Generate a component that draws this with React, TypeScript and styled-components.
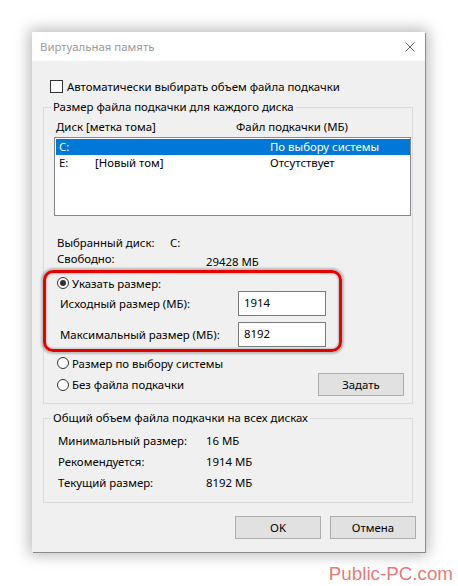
import React from "react";
import styled, { createGlobalStyle } from "styled-components";

const GlobalStyle = createGlobalStyle`
  html, body {
    margin: 0;
    padding: 0;
    background: #fff;
  }
  body {
    font-family: "Noto Sans", "Segoe UI", sans-serif;
    font-size: 11.4px;
    color: #000;
  }
`;

const Page = styled.div`
  width: 458px;
  height: 586px;
  box-sizing: border-box;
  padding: 32px 0 0 32px;
  overflow: hidden;
`;

const Dialog = styled.div`
  width: 393px;
  background: #f0f0f0;
  box-shadow: 1px 1px 0 #8a8a8a, 0 0 14px 3px rgba(0, 0, 0, 0.28);
`;

const TitleBar = styled.div`
  height: 29px;
  background: #fff;
  display: flex;
  align-items: center;
  justify-content: space-between;
  padding: 0 10px 0 8px;
  color: #9a9a9a;
`;

const Body = styled.div`
  padding: 0 9px 13px 11px;
`;

const CheckRow = styled.div`
  display: flex;
  align-items: center;
  gap: 4px;
  height: 16px;
  margin: 17px 0 5px 7px;
`;

const CheckBox = styled.span`
  width: 13px;
  height: 13px;
  box-sizing: border-box;
  border: 1px solid #333;
  background: #fff;
`;

const Group = styled.fieldset<{ $top?: number }>`
  margin: ${(p) => p.$top ?? 0}px 3px 0 0;
  padding: 0;
  min-width: 0;
  border: 1px solid #dcdcdc;
`;

const Legend = styled.legend`
  margin-left: 7px;
  padding: 0 2px;
  line-height: 16px;
`;

const GroupInner = styled.div<{ $pad: string }>`
  padding: ${(p) => p.$pad};
`;

const ListHeader = styled.div`
  display: grid;
  grid-template-columns: 180px 1fr;
  height: 16px;
  line-height: 16px;
  padding-left: 2px;
  margin: 4px 0 2px;
`;

const ListBox = styled.div`
  width: 357px;
  height: 79px;
  box-sizing: border-box;
  border: 1px solid #828790;
  background: #fff;
  padding: 1px 0 0 1px;
`;

const ListRow = styled.div<{ $selected?: boolean }>`
  display: grid;
  grid-template-columns: 36px 175px 1fr;
  height: 16px;
  line-height: 16px;
  padding-left: 3px;
  background: ${(p) => (p.$selected ? "#0078d7" : "transparent")};
  color: ${(p) => (p.$selected ? "#fff" : "#000")};
`;

const InfoRow = styled.div<{ $col: number; $top?: number }>`
  display: grid;
  grid-template-columns: ${(p) => p.$col}px 1fr;
  height: 16px;
  line-height: 16px;
  padding-left: 3px;
  margin-top: ${(p) => p.$top ?? 0}px;
`;

const Value = styled.span<{ $drop?: number }>`
  padding-top: ${(p) => p.$drop ?? 0}px;
`;

const Highlight = styled.div`
  position: relative;
  margin-top: 8px;

  &::after {
    content: "";
    position: absolute;
    top: -5px;
    bottom: -5px;
    left: -11px;
    right: 70px;
    border: 3px solid #e60000;
    border-radius: 10px;
    box-shadow: 0 0 2px 2px rgba(0, 0, 0, 0.22), inset 0 0 2px 1px rgba(0, 0, 0, 0.2);
    pointer-events: none;
  }
`;

const RadioRow = styled.div<{ $top?: number }>`
  display: flex;
  align-items: center;
  gap: 3px;
  height: 16px;
  padding-left: 3px;
  margin-top: ${(p) => p.$top ?? 0}px;
`;

const Radio = styled.span<{ $on?: boolean }>`
  width: 12px;
  height: 12px;
  box-sizing: border-box;
  border: 1px solid #333;
  border-radius: 50%;
  background: #fff;
  display: flex;
  align-items: center;
  justify-content: center;

  &::after {
    content: "";
    width: 6px;
    height: 6px;
    border-radius: 50%;
    background: ${(p) => (p.$on ? "#333" : "transparent")};
  }
`;

const FieldRow = styled.div<{ $top?: number }>`
  display: grid;
  grid-template-columns: 178px 88px;
  align-items: center;
  padding-left: 6px;
  margin-top: ${(p) => p.$top ?? 0}px;
`;

const Field = styled.div`
  height: 25px;
  box-sizing: border-box;
  border: 1px solid #7a7a7a;
  background: #fff;
  padding-left: 5px;
  line-height: 22px;
`;

const LastRow = styled.div`
  display: flex;
  align-items: center;
  justify-content: space-between;
  margin-top: 2px;
  padding-right: 8px;
`;

const Button = styled.div`
  width: 86px;
  height: 23px;
  box-sizing: border-box;
  border: 1px solid #adadad;
  background: #e1e1e1;
  display: flex;
  align-items: center;
  justify-content: center;
`;

const TotalRow = styled.div`
  display: grid;
  grid-template-columns: 148px 1fr;
  height: 21px;
  line-height: 21px;
`;

const Footer = styled.div`
  display: flex;
  justify-content: flex-end;
  gap: 9px;
  margin-top: 13px;
`;

const Watermark = styled.div`
  display: flex;
  justify-content: flex-end;
  padding-right: 5px;
  margin-top: 11px;
  font-family: "Liberation Sans", Arial, sans-serif;
  font-size: 18.8px;
  line-height: 21px;
  color: rgba(225, 40, 40, 0.65);
`;

function CloseIcon() {
  return (
    <svg width="10" height="10" viewBox="0 0 10 10">
      <path d="M0.5 0.5L9.5 9.5M9.5 0.5L0.5 9.5" stroke="#666" strokeWidth="1" fill="none" />
    </svg>
  );
}

export default function App() {
  return (
    <>
      <GlobalStyle />
      <Page>
        <Dialog>
          <TitleBar>
            <span>Виртуальная память</span>
            <CloseIcon />
          </TitleBar>
          <Body>
            <CheckRow>
              <CheckBox />
              <span>Автоматически выбирать объем файла подкачки</span>
            </CheckRow>

            <Group>
              <Legend>Размер файла подкачки для каждого диска</Legend>
              <GroupInner $pad="0 0 7px 10px">
                <ListHeader>
                  <span>Диск [метка тома]</span>
                  <span>Файл подкачки (МБ)</span>
                </ListHeader>
                <ListBox>
                  <ListRow $selected>
                    <span>C:</span>
                    <span></span>
                    <span>По выбору системы</span>
                  </ListRow>
                  <ListRow>
                    <span>E:</span>
                    <span>[Новый том]</span>
                    <span>Отсутствует</span>
                  </ListRow>
                </ListBox>

                <InfoRow $col={113} $top={19}>
                  <span>Выбранный диск:</span>
                  <span>C:</span>
                </InfoRow>
                <InfoRow $col={149}>
                  <span>Свободно:</span>
                  <Value $drop={3}>29428 МБ</Value>
                </InfoRow>

                <Highlight>
                  <RadioRow>
                    <Radio $on />
                    <span>Указать размер:</span>
                  </RadioRow>
                  <FieldRow>
                    <span>Исходный размер (МБ):</span>
                    <Field>1914</Field>
                  </FieldRow>
                  <FieldRow $top={6}>
                    <span>Максимальный размер (МБ):</span>
                    <Field>8192</Field>
                  </FieldRow>
                </Highlight>

                <RadioRow $top={8}>
                  <Radio />
                  <span>Размер по выбору системы</span>
                </RadioRow>
                <LastRow>
                  <RadioRow>
                    <Radio />
                    <span>Без файла подкачки</span>
                  </RadioRow>
                  <Button>Задать</Button>
                </LastRow>
              </GroupInner>
            </Group>

            <Group $top={6}>
              <Legend>Общий объем файла подкачки на всех дисках</Legend>
              <GroupInner $pad="4px 0 9px 14px">
                <TotalRow>
                  <span>Минимальный размер:</span>
                  <span>16 МБ</span>
                </TotalRow>
                <TotalRow>
                  <span>Рекомендуется:</span>
                  <span>1914 МБ</span>
                </TotalRow>
                <TotalRow>
                  <span>Текущий размер:</span>
                  <span>8192 МБ</span>
                </TotalRow>
              </GroupInner>
            </Group>

            <Footer>
              <Button>OK</Button>
              <Button>Отмена</Button>
            </Footer>
          </Body>
        </Dialog>
        <Watermark>Public-PC.com</Watermark>
      </Page>
    </>
  );
}
